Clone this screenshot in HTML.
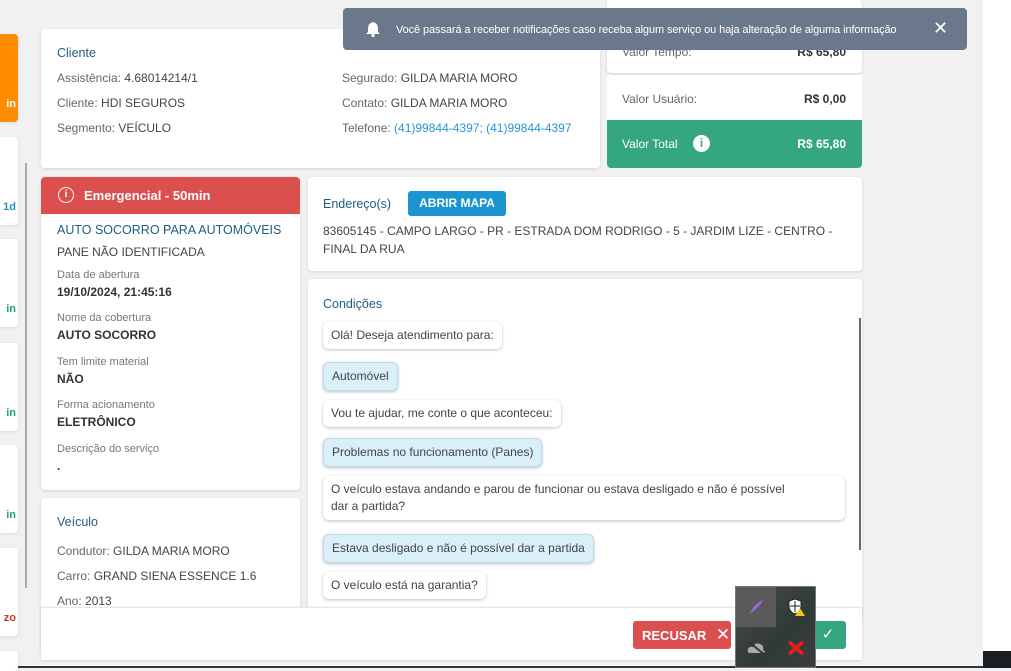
<!DOCTYPE html>
<html><head><meta charset="utf-8"><style>
*{box-sizing:border-box;margin:0;padding:0}
body{width:1011px;height:668px;overflow:hidden;background:#f1f1f1;font-family:"Liberation Sans",sans-serif;font-size:12px;color:#555;position:relative}
.a{position:absolute}
.card{position:absolute;background:#fff;border-radius:4px;box-shadow:0 1px 3px rgba(0,0,0,.12)}
.h{color:#1f5c82;font-size:12.5px}
.lab{color:#666}.val{color:#444}
.sm{font-size:11px;color:#777}
.b{font-weight:bold;color:#333}
.bub{position:absolute;left:15px;background:#fff;border-radius:6px;box-shadow:0 1px 3px rgba(0,0,0,.25);padding:5px 8px;color:#444;line-height:17px}
.bub.s{background:#dbeff8;border:1px solid #bcdbe8}
.lc{position:absolute;left:0;width:18px;background:#fff;border-radius:0 4px 4px 0;box-shadow:0 1px 3px rgba(0,0,0,.1);font-size:11px;font-weight:bold}
.lc span{position:absolute;right:2px;bottom:12px}
</style></head><body>
<div class="a" style="left:983px;top:0;width:28px;height:668px;background:#fff"></div>
<div class="a" style="left:983px;top:651px;width:28px;height:17px;background:#1a1f24"></div>
<div class="a" style="left:0;top:666px;width:983px;height:2px;background:#333"></div>

<div class="lc" style="top:34px;height:88px;background:#ff8c00;color:#fff"><span>in</span></div>
<div class="lc" style="top:137px;height:88px;color:#2a8fc8"><span>1d</span></div>
<div class="lc" style="top:239px;height:88px;color:#2a9d78"><span>in</span></div>
<div class="lc" style="top:343px;height:88px;color:#2a9d78"><span>in</span></div>
<div class="lc" style="top:445px;height:88px;color:#2a9d78"><span>in</span></div>
<div class="lc" style="top:548px;height:88px;color:#c0392b"><span>zo</span></div>
<div class="lc" style="top:651px;height:20px"></div>
<div class="a" style="left:25px;top:163px;width:2px;height:425px;background:#aaa"></div>

<div class="card" style="left:41px;top:29px;width:559px;height:139px">
 <div class="a h" style="left:16px;top:17px">Cliente</div>
 <div class="a" style="left:16px;top:42px"><span class="lab">Assistência: </span><span class="val">4.68014214/1</span></div>
 <div class="a" style="left:16px;top:67px"><span class="lab">Cliente: </span><span class="val">HDI SEGUROS</span></div>
 <div class="a" style="left:16px;top:92px"><span class="lab">Segmento: </span><span class="val">VEÍCULO</span></div>
 <div class="a" style="left:301px;top:42px"><span class="lab">Segurado: </span><span class="val">GILDA MARIA MORO</span></div>
 <div class="a" style="left:301px;top:67px"><span class="lab">Contato: </span><span class="val">GILDA MARIA MORO</span></div>
 <div class="a" style="left:301px;top:92px"><span class="lab">Telefone: </span><span style="color:#2a95d0">(41)99844-4397; (41)99844-4397</span></div>
</div>

<div class="card" style="left:607px;top:0;width:255px;height:73px">
 <div class="a lab" style="left:15px;top:45px">Valor Tempo:</div><div class="a b" style="right:16px;top:45px">R$ 65,80</div></div>
<div class="a" style="left:607px;top:75px;width:255px;height:45px;background:#fff">
 <div class="a lab" style="left:15px;top:17px">Valor Usuário:</div><div class="a b" style="right:16px;top:17px">R$ 0,00</div></div>
<div class="a" style="left:607px;top:120px;width:255px;height:48px;background:#35a77f;border-radius:0 0 4px 4px;color:#fff">
 <div class="a" style="left:15px;top:17px">Valor Total</div>
 <div class="a" style="left:86px;top:15px;width:17px;height:17px;border-radius:50%;background:#fff;color:#35a77f;font-weight:bold;font-size:12px;text-align:center;line-height:17px">i</div>
 <div class="a" style="right:16px;top:17px;font-weight:bold">R$ 65,80</div></div>

<div class="card" style="left:41px;top:177px;width:259px;height:313px">
 <div class="a" style="left:0;top:0;width:259px;height:37px;background:#dc4f4f;border-radius:4px 4px 0 0;color:#fff;font-weight:bold;font-size:13px">
  <div class="a" style="left:17px;top:10px;width:16px;height:16px;border:1.5px solid #fff;border-radius:50%;font-size:10px;text-align:center;line-height:13px">i</div>
  <div class="a" style="left:43px;top:11px">Emergencial - 50min</div></div>
 <div class="a h" style="left:16px;top:46px">AUTO SOCORRO PARA AUTOMÓVEIS</div>
 <div class="a val" style="left:16px;top:68px">PANE NÃO IDENTIFICADA</div>
 <div class="a sm" style="left:16px;top:92px">Data de abertura</div><div class="a b" style="left:16px;top:108px">19/10/2024, 21:45:16</div>
 <div class="a sm" style="left:16px;top:135px">Nome da cobertura</div><div class="a b" style="left:16px;top:151px">AUTO SOCORRO</div>
 <div class="a sm" style="left:16px;top:179px">Tem limite material</div><div class="a b" style="left:16px;top:195px">NÃO</div>
 <div class="a sm" style="left:16px;top:222px">Forma acionamento</div><div class="a b" style="left:16px;top:238px">ELETRÔNICO</div>
 <div class="a sm" style="left:16px;top:266px">Descrição do serviço</div><div class="a b" style="left:16px;top:282px">.</div>
</div>

<div class="card" style="left:41px;top:498px;width:259px;height:150px">
 <div class="a h" style="left:16px;top:17px">Veículo</div>
 <div class="a" style="left:16px;top:46px"><span class="lab">Condutor: </span><span class="val">GILDA MARIA MORO</span></div>
 <div class="a" style="left:16px;top:71px"><span class="lab">Carro: </span><span class="val">GRAND SIENA ESSENCE 1.6</span></div>
 <div class="a" style="left:16px;top:96px"><span class="lab">Ano: </span><span class="val">2013</span></div>
</div>

<div class="card" style="left:308px;top:177px;width:554px;height:94px">
 <div class="a h" style="left:15px;top:20px">Endereço(s)</div>
 <div class="a" style="left:100px;top:14px;width:98px;height:25px;background:#1a95d0;border-radius:3px;color:#fff;font-weight:bold;text-align:center;line-height:25px">ABRIR MAPA</div>
 <div class="a val" style="left:15px;top:45px;line-height:18px;width:520px">83605145 - CAMPO LARGO - PR - ESTRADA DOM RODRIGO - 5 - JARDIM LIZE - CENTRO - FINAL DA RUA</div>
</div>

<div class="card" style="left:308px;top:279px;width:554px;height:340px">
 <div class="a h" style="left:15px;top:18px">Condições</div>
 <div class="a" style="left:551px;top:39px;width:2px;height:232px;background:#666"></div>
 <div class="bub" style="top:43px">Olá! Deseja atendimento para:</div>
 <div class="bub s" style="top:83px">Automóvel</div>
 <div class="bub" style="top:121px">Vou te ajudar, me conte o que aconteceu:</div>
 <div class="bub s" style="top:159px">Problemas no funcionamento (Panes)</div>
 <div class="bub" style="top:197px;width:522px;white-space:nowrap">O veículo estava andando e parou de funcionar ou estava desligado e não é possível<br>dar a partida?</div>
 <div class="bub s" style="top:255px">Estava desligado e não é possível dar a partida</div>
 <div class="bub" style="top:293px">O veículo está na garantia?</div>
</div>

<div class="a" style="left:41px;top:607px;width:821px;height:53px;background:#fff;border-top:1px solid #e6e6e6;box-shadow:0 1px 3px rgba(0,0,0,.12)">
 <div class="a" style="left:592px;top:13px;width:98px;height:28px;background:#dc4f4f;border-radius:3px;color:#fff;font-weight:bold;font-size:13px;line-height:28px;padding-left:9px">RECUSAR <span style="font-weight:normal;font-size:17px;margin-left:6px">✕</span></div>
 <div class="a" style="left:769px;top:13px;width:36px;height:28px;background:#35a77f;border-radius:3px;color:#fff;text-align:center;line-height:28px;font-size:15px">✓</div>
</div>

<div class="a" style="left:735px;top:586px;width:81px;height:82px;background:linear-gradient(135deg,#4a4a4a,#2f3b37 60%,#3d3d3d);border:1px solid #777">
 <div class="a" style="left:0;top:0;width:40px;height:40px;background:#5a5a5a"></div>
 <svg class="a" style="left:10px;top:10px" width="20" height="20"><path d="M3 17 Q9 6 17 3 Q13 11 3 17Z" fill="#9a6ad8"/></svg>
 <svg class="a" style="left:51px;top:10px" width="20" height="20"><path d="M8 2 L14 4 V9 Q14 15 8 17 Q2 15 2 9 V4Z" fill="#fff" stroke="#222"/><path d="M8 4V15M3 9H13" stroke="#222"/><path d="M13 11 L18 19 H8Z" fill="#f4c21b"/></svg>
 <svg class="a" style="left:10px;top:52px" width="22" height="18"><path d="M4 14 Q1 14 2 10 Q3 7 7 8 Q9 3 14 5 Q18 6 17 11 Q20 12 18 14Z" fill="#aaa"/><path d="M3 3 L19 16" stroke="#333" stroke-width="2"/></svg>
 <svg class="a" style="left:50px;top:52px" width="20" height="18"><path d="M3 3 L17 15 M17 3 L3 15" stroke="#e81c1c" stroke-width="3.5"/></svg>
</div>

<div class="a" style="left:343px;top:8px;width:624px;height:42px;background:#6b778a;border-radius:4px;color:#fff;font-size:11px">
 <svg class="a" style="left:22px;top:13px" width="16" height="16"><path d="M8 1 Q3 2 3 8 V11 L1 13 H15 L13 11 V8 Q13 2 8 1Z" fill="#fff"/><circle cx="8" cy="14.5" r="1.6" fill="#fff"/></svg>
 <div class="a" style="left:53px;top:16px;white-space:nowrap;letter-spacing:-0.1px">Você passará a receber notificações caso receba algum serviço ou haja alteração de alguma informação</div>
 <div class="a" style="left:590px;top:10px;font-size:18px">✕</div>
</div>
</body></html>
